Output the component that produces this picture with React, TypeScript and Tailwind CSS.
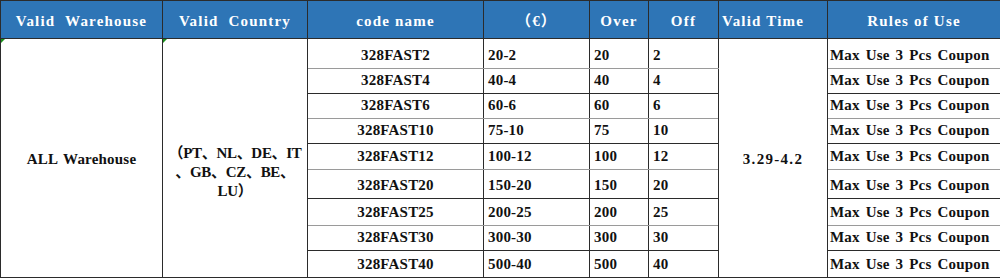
import React from "react";

type Row = { code: string; range: string; over: string; off: string; line: "gray" | "dark" };

const rows: Row[] = [
  { code: "328FAST2", range: "20-2", over: "20", off: "2", line: "gray" },
  { code: "328FAST4", range: "40-4", over: "40", off: "4", line: "dark" },
  { code: "328FAST6", range: "60-6", over: "60", off: "6", line: "gray" },
  { code: "328FAST10", range: "75-10", over: "75", off: "10", line: "dark" },
  { code: "328FAST12", range: "100-12", over: "100", off: "12", line: "gray" },
  { code: "328FAST20", range: "150-20", over: "150", off: "20", line: "dark" },
  { code: "328FAST25", range: "200-25", over: "200", off: "25", line: "gray" },
  { code: "328FAST30", range: "300-30", over: "300", off: "30", line: "dark" },
  { code: "328FAST40", range: "500-40", over: "500", off: "40", line: "dark" },
];

const heights = ["h-[30px]", "h-[25px]", "h-[25px]", "h-[25px]", "h-[26px]", "h-[29px]", "h-[27px]", "h-[25px]", "h-[27px]"];

export default function App() {
  const font = { fontFamily: '"Liberation Serif", "Noto Sans CJK SC", serif' };
  const th = "border border-[#2b2b2b] font-bold tracking-[1.2px] [word-spacing:0px] pt-[3px]";
  return (
    <div className="w-[1000px] h-[279px] bg-white overflow-hidden" style={font}>
      <table className="table-fixed border-collapse w-[1000px] text-[15px] tracking-[0.2px] [word-spacing:2px] font-bold text-[#111] leading-none">
        <colgroup>
          <col className="w-[162px]" />
          <col className="w-[145px]" />
          <col className="w-[176px]" />
          <col className="w-[106px]" />
          <col className="w-[59px]" />
          <col className="w-[70px]" />
          <col className="w-[109px]" />
          <col className="w-[173px]" />
        </colgroup>
        <thead>
          <tr className="h-[38px] bg-[#2e75b6] text-white">
            <th className={`${th} text-center whitespace-pre`}>Valid  Warehouse</th>
            <th className={`${th} text-center whitespace-pre`}>Valid  Country</th>
            <th className={`${th} text-center`}>code name</th>
            <th className={`${th} text-center`}>（€）</th>
            <th className={`${th} text-center`}>Over</th>
            <th className={`${th} text-center`}>Off</th>
            <th className={`${th} text-left pl-[3px]`}>Valid Time</th>
            <th className={`${th} text-center`}>Rules of Use</th>
          </tr>
        </thead>
        <tbody>
          {rows.map((r, i) => {
            const b = r.line === "gray" ? "border-b-[#9a9a9a]" : "border-b-[#2b2b2b]";
            const cell = `border border-[#2b2b2b] ${b} align-bottom pb-[5px]`;
            return (
              <tr key={r.code} className={heights[i]}>
                {i === 0 && (
                  <>
                    <td rowSpan={9} className="relative border border-[#2b2b2b] text-center align-middle pt-[2px]">
                      <span className="absolute left-0 top-0 w-0 h-0 border-t-[4px] border-r-[4px] border-t-[#1a8f1a] border-r-transparent" />
                      ALL Warehouse
                    </td>
                    <td rowSpan={9} className="relative border border-[#2b2b2b] text-center align-middle leading-[19px] tracking-[-0.3px] pt-[28px]">
                      <span className="absolute left-0 top-0 w-0 h-0 border-t-[4px] border-r-[4px] border-t-[#1a8f1a] border-r-transparent" />
                      （PT、NL、DE、IT
                      <br />
                      、GB、CZ、BE、
                      <br />
                      LU）
                    </td>
                  </>
                )}
                <td className={`${cell} text-center`}>{r.code}</td>
                <td className={`${cell} text-left pl-[4px]`}>{r.range}</td>
                <td className={`${cell} text-left pl-[4px]`}>{r.over}</td>
                <td className={`${cell} text-left pl-[4px]`}>{r.off}</td>
                {i === 0 && (
                  <td rowSpan={9} className="border border-[#2b2b2b] text-center align-middle pt-[2px] tracking-[1.3px]">
                    3.29-4.2
                  </td>
                )}
                <td className={`${cell} text-left pl-[2px] whitespace-nowrap`}>Max Use 3 Pcs Coupon</td>
              </tr>
            );
          })}
        </tbody>
      </table>
    </div>
  );
}
